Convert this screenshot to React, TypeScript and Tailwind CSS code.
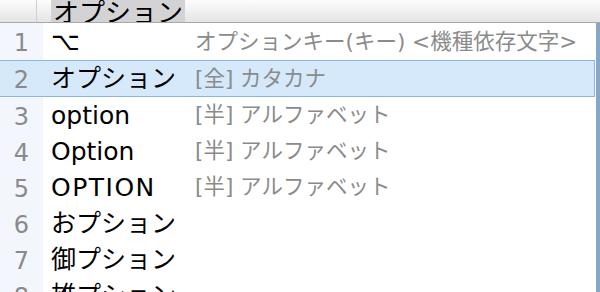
import React from "react";

const rows: { n: number; text: string; note?: string; track?: boolean }[] = [
  { n: 1, text: "⌥", note: "オプションキー(キー) <機種依存文字>" },
  { n: 2, text: "オプション", note: "[全] カタカナ" },
  { n: 3, text: "option", note: "[半] アルファベット" },
  { n: 4, text: "Option", note: "[半] アルファベット" },
  { n: 5, text: "OPTION", note: "[半] アルファベット", track: true },
  { n: 6, text: "おプション" },
  { n: 7, text: "御プション" },
  { n: 8, text: "雄プション" },
];

export default function App() {
  const font = {
    fontFamily: '"DejaVu Sans", "Noto Sans CJK JP", sans-serif',
  };
  return (
    <div
      className="w-[600px] h-[292px] overflow-hidden bg-white flex flex-col"
      style={font}
    >
      <div className="h-[23px] shrink-0 flex bg-gradient-to-b from-[#fdfdfd] to-[#e4e4e4] border-b border-[#a9a9a9]">
        <div className="w-[37px] border-r border-[#cfcfcf]" />
        <div className="w-[14px]" />
        <div className="h-[22px] bg-[#d3d3d5] px-[2px] flex items-end overflow-hidden">
          <span className="text-[26px] leading-[26px] text-black translate-y-[4px]">オプション</span>
        </div>
      </div>
      <div className="flex flex-1 min-h-0">
        <div className="flex-1 flex flex-col relative">
          <div className="absolute left-0 top-0 bottom-0 w-[43px] bg-[#f3f6fd]" />
          {rows.map((r) => {
            const sel = r.n === 2;
            const h = r.n <= 2 ? "h-[37px]" : "h-[36px]";
            return (
              <div
                key={r.n}
                className={
                  "relative shrink-0 flex items-center " +
                  h +
                  (sel
                    ? " bg-[#d5e9fa] border-y border-r border-[#8cb6dd] mr-[1px]"
                    : "")
                }
              >
                <div className="w-[43px] shrink-0 text-center text-[24px] text-[#8a8a8a] pt-[3px]">
                  {r.n}
                </div>
                <div
                  className={
                    "w-[152px] shrink-0 pl-[8px] text-[25px] text-black pt-[1px] whitespace-nowrap" +
                    (r.track ? " tracking-[1.5px]" : "")
                  }
                >
                  {r.text}
                </div>
                {r.note && (
                  <div className="text-[21.5px] text-[#8b8b8b] whitespace-nowrap pt-[1px]">
                    {r.note}
                  </div>
                )}
              </div>
            );
          })}
        </div>
        <div className="w-[4px] shrink-0 bg-[#88a6c6]" />
      </div>
    </div>
  );
}
